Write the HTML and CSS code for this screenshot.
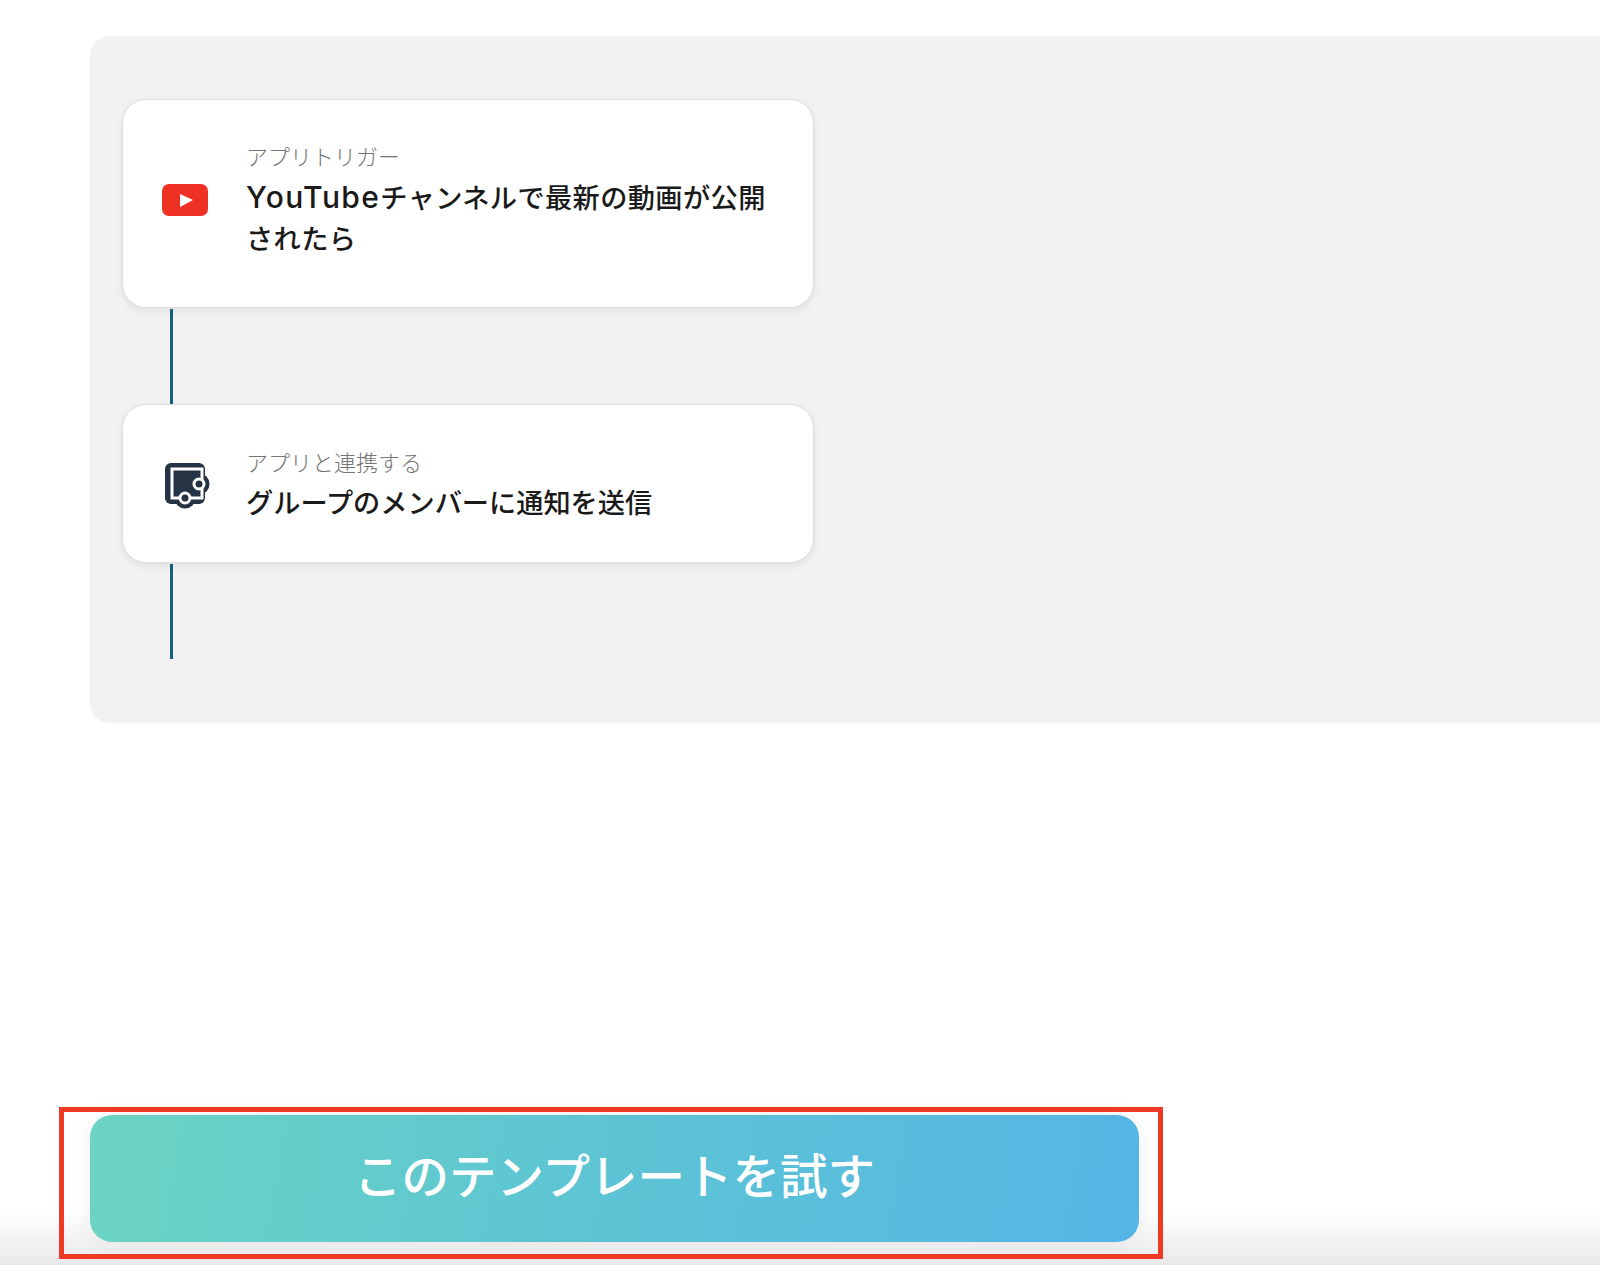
FILE: index.html
```html
<!DOCTYPE html>
<html lang="ja">
    <head>
        <meta charset="utf-8">
        <title>このテンプレートを試す</title>
        <link rel="stylesheet" href="styles.css">
    </head>
    <body>
        <div class="flowPanel">
            <div class="flowCard tall">
                <svg class="appIcon" viewBox="0 -1 46 46">
                    <rect x="0" y="7" width="46" height="32" rx="7" fill="#ee3124"/>
                    <polygon points="18,17 31,23 18,30" fill="#fff"/>
                </svg>
                <div class="cardText">
                    <div class="cardLabel">アプリトリガー</div>
                    <div class="cardTitle"><span class="latin">YouTube</span>チャンネルで最新の動画が公開<br>されたら</div>
                </div>
            </div>
            <div class="connector"></div>
            <div class="flowCard">
                <svg class="appIcon" viewBox="-3 -2 46 46">
                    <!-- dark body with the two round bumps -->
                    <rect x="0" y="0" width="40" height="41" rx="6" fill="#253345"/>
                    <circle cx="34" cy="21" r="10.5" fill="#253345"/>
                    <circle cx="20" cy="35" r="10.5" fill="#253345"/>
                    <rect x="7" y="6" width="30" height="29" fill="none" stroke="#fff" stroke-width="3"/>
                    <circle cx="34" cy="21" r="5" fill="#253345" stroke="#fff" stroke-width="3"/>
                    <circle cx="20" cy="35" r="5" fill="#253345" stroke="#fff" stroke-width="3"/>
                </svg>
                <div class="cardText">
                    <div class="cardLabel">アプリと連携する</div>
                    <div class="cardTitle">グループのメンバーに通知を送信</div>
                </div>
            </div>
            <div class="connector"></div>
        </div>
        <div class="footerBar">
            <div class="tryButton">このテンプレートを試す</div>
            <div class="redFrame"></div>
        </div>
    </body>
</html>
```

FILE: styles.css
```css
html, body {margin: 0;
            height: 1265px;
            overflow: hidden;
            background-color: white;
            font-family: Inter, "Noto Sans CJK JP", "Noto Sans", sans-serif;}
body {display: flex;
      flex-direction: column;
      padding-top: 36px;
      box-sizing: border-box;}

.flowPanel {margin-left: 90px;
            height: 687px;
            padding: 63px 0 0 32px;
            box-sizing: border-box;
            background-color: #f2f2f2;
            border-radius: 20px 0 0 20px;}
.flowCard  {width: 692px;
            height: 159px;
            box-sizing: border-box;
            display: flex;
            align-items: center;
            gap: 38px;
            padding: 0 20px 0 39px;
            background-color: white;
            border: 1px solid #dedede;
            border-radius: 24px;
            box-shadow: 0 3px 8px rgba(0, 0, 0, 0.08);}
.tall      {height: 209px;
            padding-bottom: 10px;}
.appIcon   {width: 46px;
            height: 46px;
            flex: none;
            overflow: visible;}
.cardText  {flex: 1;
            min-width: 0;
            padding-top: 3px;}
.cardLabel {font-size: 22px;
            line-height: 34px;
            margin-bottom: 3px;
            font-weight: 300;
            color: #757575;}
.cardTitle {font-size: 27.2px;
            line-height: 41px;
            font-weight: 500;
            color: #1a1a1a;}
.tall .cardTitle {letter-spacing: 0.4px;}
.latin     {font-size: 30px;
            letter-spacing: 1.4px;}
.connector {width: 3px;
            height: 95px;
            margin: 1px 0 0 48px;
            background-color: #16607f;}

.footerBar {position: relative;
             flex: 1;
             margin-top: 392px;
             background: linear-gradient(to bottom, white 0px, white 95px, #e9e9e9 150px);}
.tryButton {width: 1049px;
            height: 127px;
            margin-left: 90px;
            padding-bottom: 10px;
            box-sizing: border-box;
            display: flex;
            align-items: center;
            justify-content: center;
            border-radius: 22px;
            background: linear-gradient(100deg, #6bd4c2, #5cc4d4 50%, #55b5e5);
            box-shadow: 0 0 24px rgba(0, 0, 0, 0.06);
            color: white;
            font-size: 47.5px;
            font-weight: 500;}
.redFrame  {position: absolute;
            left: 59px;
            top: -8px;
            width: 1104px;
            height: 152px;
            box-sizing: border-box;
            border: 5px solid #ee3a24;}
```
